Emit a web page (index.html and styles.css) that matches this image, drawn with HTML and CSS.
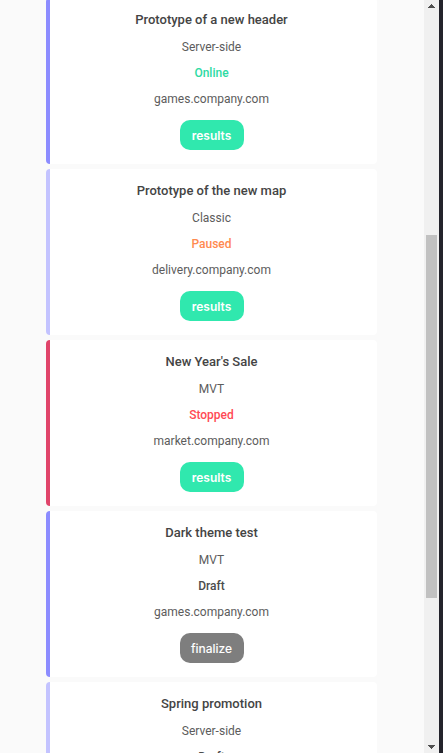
FILE: index.html
```
<!DOCTYPE html>
<html lang="en">
<head>
<meta charset="utf-8">
<meta name="viewport" content="width=device-width, initial-scale=1">
<title>Tests</title>
<link rel="stylesheet" href="styles.css">
</head>
<body>
<div class="app">
  <main class="content">
    <ul class="tests">
      <li class="card card--violet">
        <h2 class="card__title">Prototype of a new header</h2>
        <p class="card__row">Server-side</p>
        <p class="card__row status status--online">Online</p>
        <p class="card__row">games.company.com</p>
        <button class="btn" type="button">results</button>
      </li>
      <li class="card card--lilac">
        <h2 class="card__title">Prototype of the new map</h2>
        <p class="card__row">Classic</p>
        <p class="card__row status status--paused">Paused</p>
        <p class="card__row">delivery.company.com</p>
        <button class="btn" type="button">results</button>
      </li>
      <li class="card card--red">
        <h2 class="card__title">New Year's Sale</h2>
        <p class="card__row">MVT</p>
        <p class="card__row status status--stopped">Stopped</p>
        <p class="card__row">market.company.com</p>
        <button class="btn" type="button">results</button>
      </li>
      <li class="card card--violet">
        <h2 class="card__title">Dark theme test</h2>
        <p class="card__row">MVT</p>
        <p class="card__row status">Draft</p>
        <p class="card__row">games.company.com</p>
        <button class="btn btn--draft" type="button">finalize</button>
      </li>
      <li class="card card--lilac">
        <h2 class="card__title">Spring promotion</h2>
        <p class="card__row">Server-side</p>
        <p class="card__row status">Draft</p>
      </li>
    </ul>
  </main>
  <div class="scrollbar" aria-hidden="true">
    <svg class="scrollbar__arrow" viewBox="0 0 7 4"><path d="M3 0h1v1h1v1h1v1h1v1H0V3h1V2h1V1h1z"/></svg>
    <div class="scrollbar__track"><div class="scrollbar__thumb"></div></div>
    <svg class="scrollbar__arrow" viewBox="0 0 7 4"><path d="M0 0h7v1H6v1H5v1H4v1H3V3H2V2H1V1H0z"/></svg>
  </div>
</div>
</body>
</html>
```
FILE: styles.css
```
* {
  box-sizing: border-box;
}

body {
  margin: 0;
  background: #fafafa;
  color: #5c5c5c;
  font-family: Roboto, "Liberation Sans", sans-serif;
}

.app {
  display: flex;
  height: 100vh;
  overflow: hidden;
  border-right: 4px solid #23232b;
}

.content {
  flex: 1;
  padding: 0 47px 0 46px;
}

.tests {
  display: flex;
  flex-direction: column;
  gap: 5px;
  margin: -2px 0 0;
  padding: 0;
  list-style: none;
}

.card {
  display: flex;
  flex-direction: column;
  align-items: center;
  min-height: 166px;
  padding: 8px 4px 14px 0;
  border-left: 4px solid;
  border-radius: 4px;
  background: #fff;
  text-align: center;
}

.card--violet {
  border-color: #8c8cff;
}

.card--lilac {
  border-color: #c3c3ff;
}

.card--red {
  border-color: #e0446a;
}

.card__title {
  margin: 0;
  color: #444;
  font-size: 13px;
  font-weight: 500;
  line-height: 28px;
}

.card__row {
  margin: 0;
  font-size: 12px;
  line-height: 26px;
}

.status {
  color: #4c4c4c;
  font-weight: 500;
}

.status--online {
  color: #2edaa3;
}

.status--paused {
  color: #ff8a50;
}

.status--stopped {
  color: #ff4a55;
}

.btn {
  width: 64px;
  height: 30px;
  margin-top: 8px;
  padding: 0;
  border: 0;
  border-radius: 10px;
  background: #30e8ae;
  color: #fff;
  font: 600 12px Inter, sans-serif;
}

.btn--draft {
  background: #7e7e7e;
  font-weight: 500;
}

.scrollbar {
  display: flex;
  flex-direction: column;
  align-items: center;
  width: 15px;
  padding: 4px 0;
  background: #f0f0f0;
}

.scrollbar__arrow {
  width: 7px;
  height: 4px;
  fill: #505050;
}

.scrollbar__track {
  display: grid;
  flex: 1;
  grid-template-rows: 227fr 363fr 147fr;
  width: 11px;
}

.scrollbar__thumb {
  grid-row: 2;
  background: #c1c1c1;
}
```
